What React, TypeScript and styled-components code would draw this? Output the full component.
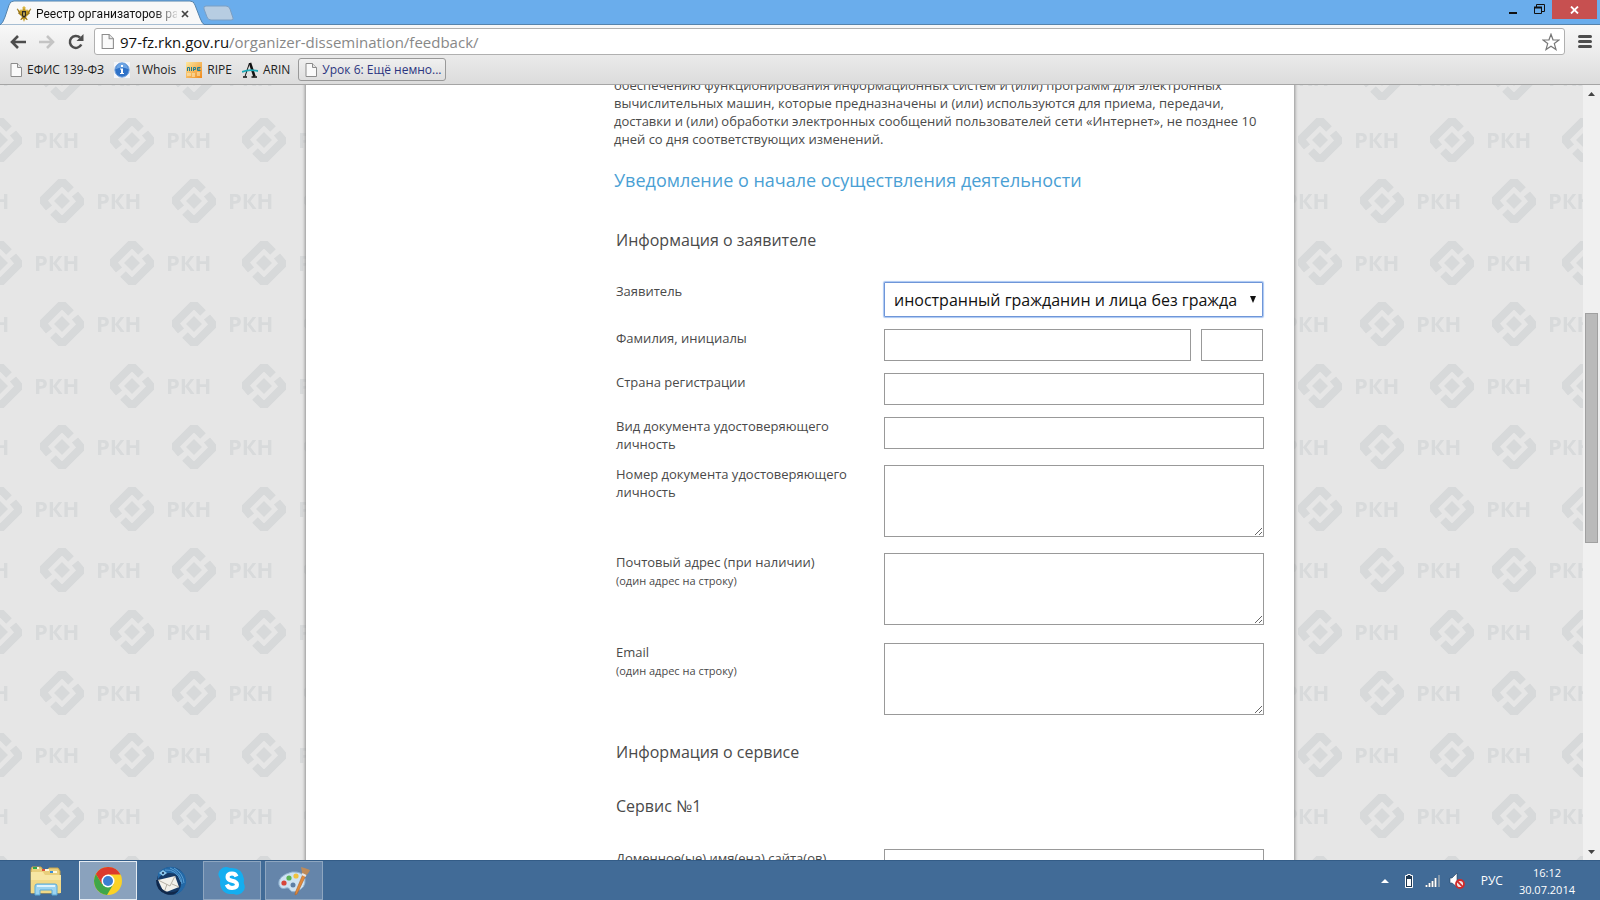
import React from "react";
import styled, { createGlobalStyle, css } from "styled-components";

const GlobalStyle = createGlobalStyle`
  * { box-sizing: border-box; }
  body { margin: 0; font-family: "Open Sans", "Noto Sans", sans-serif; color: #4a4a4a; }
  button, input, textarea, select { font: inherit; }
`;

const Window = styled.div`
  display: flex;
  flex-direction: column;
  height: 100vh;
  overflow: hidden;
`;

const TitleBar = styled.header`
  display: flex;
  flex: none;
  height: 24px;
  background: #6aadec;
`;

const Tab = styled.div`
  display: flex;
  align-items: center;
  position: relative;
  width: 204px;
  height: 25px;
  padding: 2px 13px 0 16px;
  font-family: Roboto, "Open Sans", sans-serif;
  font-size: 12px;
  color: #111;
`;

const TabShape = styled.svg`
  position: absolute;
  inset: 0;
`;

const TabTitle = styled.span`
  position: relative;
  flex: 1;
  min-width: 0;
  margin: 0 2px 0 4px;
  white-space: nowrap;
  mask-image: linear-gradient(to right, #000 118px, transparent 144px);
`;

const PlainButton = styled.button`
  display: flex;
  align-items: center;
  justify-content: center;
  flex: none;
  padding: 0;
  border: 0;
  background: none;
  color: inherit;
`;

const TabIcon = styled.svg`
  position: relative;
  flex: none;
`;

const TabClose = styled(PlainButton)`
  position: relative;
  width: 12px;
  height: 12px;
`;

const Caption = styled.div`
  display: flex;
  margin-left: auto;
  padding-right: 3px;
`;

const CaptionButton = styled(PlainButton)<{ $close?: boolean }>`
  width: ${(p) => (p.$close ? 45 : 26)}px;
  height: 19px;
  background: ${(p) => (p.$close ? "#c75050" : "transparent")};
`;

const Toolbar = styled.nav`
  display: flex;
  align-items: center;
  flex: none;
  height: 34px;
  padding: 0 8px 0 3px;
  border-top: 1px solid #5583ac;
  background: linear-gradient(#f8f8f8, #e9e9e9);
`;

const NavButton = styled(PlainButton)`
  width: 29px;
  height: 26px;
`;

const AddressBar = styled.div`
  display: flex;
  align-items: center;
  flex: 1;
  height: 27px;
  margin-left: 4px;
  padding: 0 4px 0 6px;
  border: 1px solid #b0b0b0;
  border-radius: 3px;
  background: #fff;
`;

const Url = styled.a`
  flex: 1;
  margin-left: 6px;
  font-size: 15px;
  line-height: 20px;
  color: #888;
  text-decoration: none;
  b { font-weight: 400; color: #111; }
`;

const MenuButton = styled(PlainButton)`
  width: 14px;
  height: 26px;
  margin-left: 13px;
`;

const Bookmarks = styled.nav`
  display: flex;
  align-items: center;
  flex: none;
  height: 27px;
  padding: 0 10px 3px;
  border-bottom: 1px solid #a5a5a5;
  background: linear-gradient(#e9e9e9, #dcdcdc);
`;

const Bookmark = styled.a<{ $raised?: boolean }>`
  display: flex;
  align-items: center;
  gap: 5px;
  height: 23px;
  margin-right: 10px;
  font-size: 12px;
  color: #222;
  text-decoration: none;
  white-space: nowrap;
  ${(p) =>
    p.$raised &&
    css`
      margin-left: -2px;
      padding: 0 4px 0 6px;
      border: 1px solid #999;
      border-radius: 3px;
      background: linear-gradient(#f0f0f0, #dedede);
      color: #2b3580;
    `}
`;

const Viewport = styled.div`
  display: flex;
  flex: 1;
  min-height: 0;
`;

const Page = styled.div`
  flex: 1;
  position: relative;
  padding-left: 17px;
  overflow: hidden;
  background: #e6e6e6;
`;

const Wallpaper = styled.svg`
  position: absolute;
  top: 0;
  left: 0;
  width: 100%;
  height: 100%;
  font-family: "Open Sans", sans-serif;
`;

const Sheet = styled.main`
  position: relative;
  max-width: 988px;
  min-height: 100%;
  margin: 0 auto;
  padding: 0 30px 0 308px;
  background: #fff;
  box-shadow: 0 0 3px 1px #909090;
`;

const Article = styled.article`
  margin-top: -9px;
`;

const Paragraph = styled.p`
  margin: 0;
  font-size: 13px;
  line-height: 18px;
`;

const Title = styled.h1`
  margin: 20px 0 29px;
  font-size: 18px;
  font-weight: 400;
  line-height: 24px;
  color: #4a9fd4;
`;

const Section = styled.h2`
  margin: 0;
  padding: 8px 2px 31px;
  font-size: 16px;
  font-weight: 400;
  line-height: 22px;
`;

const ServiceTitle = styled.h3`
  margin: 0;
  padding: 0 2px 31px;
  font-size: 16px;
  font-weight: 400;
  line-height: 24px;
`;

const Field = styled.div<{ $gap?: number }>`
  display: grid;
  grid-template-columns: 270px 1fr;
  align-items: start;
  margin-bottom: ${(p) => p.$gap ?? 12}px;
`;

const Label = styled.label`
  padding: 0 24px 0 2px;
  font-size: 13px;
  line-height: 18px;
`;

const Hint = styled.small`
  display: block;
  font-size: 11px;
  line-height: 20px;
`;

const Pair = styled.div`
  display: grid;
  grid-template-columns: 1fr 62px;
  gap: 10px;
  padding-right: 1px;
`;

const boxed = css`
  display: block;
  width: 100%;
  margin: 0;
  border: 1px solid #999;
  border-radius: 0;
  background: #fff;
  outline: 0;
`;

const TextInput = styled.input`
  ${boxed}
  height: 32px;
`;

const TextArea = styled.textarea`
  ${boxed}
  height: 72px;
  resize: both;
`;

const SelectWrap = styled.div`
  position: relative;
  padding-right: 1px;
`;

const Select = styled.select`
  ${boxed}
  height: 35px;
  padding: 0 24px 0 9px;
  border-color: #6f96d8;
  border-radius: 1px;
  box-shadow: 0 0 1px 1px #a9c6f2;
  font-size: 16px;
  color: #111;
  appearance: none;
`;

const SelectArrow = styled.svg`
  position: absolute;
  top: 14px;
  right: 8px;
  pointer-events: none;
`;

const ScrollBar = styled.div`
  display: flex;
  flex-direction: column;
  align-items: center;
  width: 17px;
  background: #f0f0f0;
`;

const ScrollButton = styled(PlainButton)`
  width: 17px;
  height: 17px;
`;

const ScrollTrack = styled.div`
  display: grid;
  grid-template-rows: 211fr 229fr 300fr;
  flex: 1;
  width: 13px;
`;

const ScrollThumb = styled.div`
  grid-row: 2;
  border: 1px solid #a0a0a0;
  background: #bababa;
`;

const TaskBar = styled.footer`
  display: flex;
  align-items: center;
  flex: none;
  height: 40px;
  padding: 0 25px 0 17px;
  border-top: 1px solid #335c87;
  background: #416b97;
  color: #fff;
`;

const Tasks = styled.div`
  display: flex;
  gap: 4px;
`;

const Task = styled(PlainButton)<{ $state?: "open" | "active" }>`
  width: 58px;
  height: 39px;
  border: 1px solid
    ${(p) => (p.$state === "active" ? "#e4ebf2" : p.$state ? "#8ea6c0" : "transparent")};
  background: ${(p) => (p.$state === "active" ? "#8aa2bd" : p.$state ? "#6585aa" : "none")};
`;

const Tray = styled.div`
  display: flex;
  align-items: center;
  margin-left: auto;
  font-size: 12px;
`;

const TrayButton = styled(PlainButton)`
  width: 24px;
  height: 24px;
`;

const Language = styled(PlainButton)`
  margin-left: 12px;
  font-size: 12px;
`;

const Clock = styled.time`
  margin-left: 16px;
  font-size: 11px;
  line-height: 17px;
  text-align: center;
`;

const Eagle = () => (
  <TabIcon width="16" height="16" viewBox="0 0 16 16">
    <path d="M1 2l2 6 3 3-2 3 3-1 1 3 1-3 3 1-2-3 3-3 2-6-3 3-1-2-1 2-1-3H7L6 5 5 3 4 5z" fill="#c29a22" />
    <path d="M1 3l3 4M15 3l-3 4M2 7l4 2M14 7l-4 2M5 14l2-3M11 14L9 11" stroke="#6b4d10" strokeWidth=".6" />
    <path d="M6 5h4v5l-2 2-2-2z" fill="#2c2a25" />
    <path d="M8 6v4M7 8h2" stroke="#e4c75c" />
    <path d="M6 2l2-2 2 2-2 1z" fill="#d9b53e" />
  </TabIcon>
);

const PageIcon = ({ size = 14 }: { size?: number }) => (
  <svg width={size - 2} height={size} viewBox="0 0 12 14">
    <path d="M1 .5h6.500L11.500 4.500v9H1z" fill="#fafafa" stroke="#8c8c8c" />
    <path d="M7.500.5v4h4" fill="#e4e4e4" stroke="#8c8c8c" />
  </svg>
);

const InfoIcon = () => (
  <svg width="16" height="16" viewBox="0 0 16 16">
    <path d="M0 0h16v16H0z" fill="#f4f6fa" />
    <circle cx="8" cy="8" r="7.200" fill="#2f72c8" stroke="#7ba6dc" />
    <path d="M2 7a6 6 0 0 1 12 0q-6-3-12 0z" fill="#6ea5e4" />
    <path d="M7 3h2v2H7zM6 6.500h3V11h1v1H6v-1h1V7.500H6z" fill="#fff" />
  </svg>
);

const RipeIcon = () => (
  <svg width="16" height="16" viewBox="0 0 16 16">
    <defs>
      <linearGradient id="ripe" x2="1" y2="1">
        <stop stopColor="#fbe7a0" />
        <stop offset="1" stopColor="#f08a1c" />
      </linearGradient>
    </defs>
    <path d="M0 0h16v16H0z" fill="url(#ripe)" />
    <path d="M1.500 9V5.500h2V9M5.500 5v4M7.500 9V5.500h2v2h-2M14.500 5.500h-3v3h3M11.500 7h2.500" fill="none" stroke="#1d7f96" />
    <path d="M2 11v3M4 11v3M6 12h3M6 14h3M11 11h3M11 13h3" stroke="#fdf1c8" />
  </svg>
);

const ArinIcon = () => (
  <svg width="16" height="16" viewBox="0 0 16 16">
    <path d="M7.500 1L3 14.500" stroke="#111" />
    <path d="M8 1l4.500 13.500" stroke="#111" strokeWidth="2.500" />
    <path d="M1 15h4M9.500 15H15" stroke="#111" strokeWidth="1.500" />
    <path d="M0 10q7-3 16-1" fill="none" stroke="#19a8b5" strokeWidth="1.800" />
  </svg>
);

const ExplorerIcon = () => (
  <svg width="34" height="30" viewBox="0 0 34 30">
    <path d="M2 4l1-3h9l2 3h5l1-2h9l2 3v22H2z" fill="#e9cf7c" stroke="#c7a44b" />
    <path d="M5 2h5M14 4h6M22 6h6" stroke="#fff8de" strokeWidth="2" />
    <path d="M4 2h4" stroke="#2fa64c" strokeWidth="2" />
    <path d="M13 4h3" stroke="#d94f36" strokeWidth="2" />
    <path d="M21 6h3" stroke="#3b8fd8" strokeWidth="2" />
    <path d="M2 6h12l2 3h16v18H2z" fill="#f7e6a3" />
    <path d="M2 14h30v13H2z" fill="#f1d987" />
    <path d="M6 29V20q0-2 2-2h18q2 0 2 2v9h-5v-5H11v5z" fill="#9cd4f0" stroke="#5ba9d6" />
    <path d="M8 20h18" stroke="#dff3fc" strokeWidth="2" />
  </svg>
);

const ChromeIcon = () => (
  <svg width="30" height="30" viewBox="0 0 30 30">
    <circle cx="15" cy="15" r="14" fill="#fbd226" />
    <path d="M2.900 8A14 14 0 0 0 14 29l6.500-11-5.500-3-6 3z" fill="#3fa648" />
    <path d="M2.900 8A14 14 0 0 1 27.500 8.500H15L9 18z" fill="#dc3a2c" />
    <circle cx="15" cy="15" r="6.500" fill="#fff" />
    <circle cx="15" cy="15" r="5" fill="#3a7fd0" />
  </svg>
);

const ThunderbirdIcon = () => (
  <svg width="32" height="32" viewBox="0 0 32 32">
    <circle cx="17" cy="16" r="14" fill="#163a66" />
    <path d="M4 8Q14-2 24 4q9 5 8 14-2 9-12 12 8-6 7-13-2-9-11-9Q8 7 4 14z" fill="#2368a6" />
    <path d="M11 5q12-1 16 12M16 3q11 4 12 16M20 3q9 5 10 15" fill="none" stroke="#5a9fd4" />
    <path d="M4 15l17-4 4 11-15 6z" fill="#f3f1ea" />
    <path d="M4 15l12 6 5-10M10 28l3-9M25 22l-7-3" fill="none" stroke="#b5b0a5" />
    <path d="M2 15q0 11 10 14 9 2 13-4-7 4-14 1-6-3-7-11z" fill="#10284b" />
    <path d="M5 8l4-3 4 3-4 3z" fill="#8cc6ea" />
    <circle cx="9" cy="8" r="1" fill="#0f2444" />
  </svg>
);

const SkypeIcon = () => (
  <svg width="30" height="30" viewBox="0 0 30 30">
    <path d="M9 1q2 0 4 1 12-1 14 11 0 2-.3 4 3 6-2 10-4 3-8 1Q4 29 3 17l.200-4Q-1 7 4 3q2-2 5-2z" fill="#14aef0" />
    <path d="M19.500 10.500Q18.500 7.500 15 7.500q-4.500 0-4.500 3.500 0 3 4.500 3.800 5 1 5 4t-5 3.200q-4 0-5.200-3.500" fill="none" stroke="#fff" strokeWidth="4" />
  </svg>
);

const PaintIcon = () => (
  <svg width="34" height="32" viewBox="0 0 34 32">
    <path d="M15 7q11-1 13 7 1 9-8 12-5 2-7-1-1-3-4-2-5 2-7-3Q0 11 15 7z" fill="#cfe3f3" stroke="#8fb2d0" />
    <circle cx="16" cy="20" r="2.500" fill="#5f7fa5" />
    <circle cx="7" cy="18" r="2.600" fill="#d8463b" />
    <circle cx="12" cy="13" r="2.600" fill="#5bb455" />
    <circle cx="19" cy="11" r="2.600" fill="#f0c23e" />
    <path d="M29 10L20 29l-2 1 .5-3L26 9z" fill="#e08a3c" stroke="#b1652a" strokeWidth=".6" />
    <path d="M24 2q4 1 9 3-2 5-6 6-3-1-2-4z" fill="#bd8a59" />
    <path d="M25 9l4 2" stroke="#e6e6e6" strokeWidth="2" />
  </svg>
);

const Emblem = ({ x, y }: { x: number; y: number }) => (
  <g transform={`translate(${x} ${y})`}>
    <path d="M9 -11L2 -18H-2L-18 -2V1L-13 7M-9 11L-2 18H2L18 2V-1L13 -7" fill="none" stroke="#d7d9da" strokeWidth="8" />
    <path d="M0 -8L8 0L0 8L-8 0z" fill="#d7d9da" />
    <text x="34" y="8" fontSize="22" fontWeight="700" fill="#d8dadb">РКН</text>
  </g>
);

const bookmarks = [
  { name: "ЕФИС 139-ФЗ", icon: <PageIcon /> },
  { name: "1Whois", icon: <InfoIcon /> },
  { name: "RIPE", icon: <RipeIcon /> },
  { name: "ARIN", icon: <ArinIcon /> },
  { name: "Урок 6: Ещё немно...", icon: <PageIcon />, raised: true },
];

const App = () => (
  <Window>
    <GlobalStyle />
    <TitleBar>
      <Tab>
        <TabShape width="240" height="25" viewBox="0 0 240 25">
          <path d="M0 25Q3 23 5 17L9 5q1-4 5-4h176q4 0 5 4l5 13q2 6 5 7z" fill="#f8f8f8" stroke="#5583ac" />
          <path d="M206 6h20q3 0 4 3l3 9q1 2-2 2h-20q-3 0-4-3l-3-8q-1-3 2-3z" fill="#b7cde2" stroke="#7b9fc4" />
        </TabShape>
        <Eagle />
        <TabTitle>Реестр организаторов ра</TabTitle>
        <TabClose aria-label="Закрыть вкладку">
          <svg width="8" height="8" viewBox="0 0 8 8"><path d="M1 1l6 6M7 1L1 7" stroke="#444" strokeWidth="1.700" /></svg>
        </TabClose>
      </Tab>
      <Caption>
        <CaptionButton aria-label="Свернуть">
          <svg width="10" height="10" viewBox="0 0 10 10"><path d="M1 8h8" stroke="#111" strokeWidth="2" /></svg>
        </CaptionButton>
        <CaptionButton aria-label="Восстановить">
          <svg width="11" height="11" viewBox="0 0 11 11">
            <path d="M.5 3.500h7v6h-7zM2.500 3V.5h8v7H8" fill="none" stroke="#111" />
            <path d="M0 3.500h8" stroke="#111" strokeWidth="2" />
          </svg>
        </CaptionButton>
        <CaptionButton $close aria-label="Закрыть">
          <svg width="9" height="8" viewBox="0 0 9 8"><path d="M1 .5l7 7M8 .5l-7 7" stroke="#fff" strokeWidth="1.800" /></svg>
        </CaptionButton>
      </Caption>
    </TitleBar>
    <Toolbar>
      <NavButton aria-label="Назад">
        <svg width="16" height="14" viewBox="0 0 16 14"><path d="M16 7H3M8 1L2 7l6 6" fill="none" stroke="#4d4d4d" strokeWidth="2.600" /></svg>
      </NavButton>
      <NavButton aria-label="Вперёд">
        <svg width="16" height="14" viewBox="0 0 16 14"><path d="M0 7h13M8 1l6 6-6 6" fill="none" stroke="#c4c4c4" strokeWidth="2.600" /></svg>
      </NavButton>
      <NavButton aria-label="Обновить">
        <svg width="16" height="16" viewBox="0 0 16 16">
          <path d="M13.300 10.500A6 6 0 1 1 12 3.500" fill="none" stroke="#4d4d4d" strokeWidth="2.500" />
          <path d="M15.500 0v7h-7z" fill="#4d4d4d" />
        </svg>
      </NavButton>
      <AddressBar>
        <PageIcon size={15} />
        <Url href="#"><b>97-fz.rkn.gov.ru</b>/organizer-dissemination/feedback/</Url>
        <PlainButton aria-label="В закладки">
          <svg width="18" height="18" viewBox="0 0 18 18">
            <path d="M9 1.200l2 5.600 6 .2-4.700 3.600 1.700 5.900L9 13.200l-5 3.300 1.700-5.900L1 7l6-.2z" fill="#fff" stroke="#777" strokeWidth="1.200" />
          </svg>
        </PlainButton>
      </AddressBar>
      <MenuButton aria-label="Меню">
        <svg width="14" height="13" viewBox="0 0 14 13"><path d="M1.500 1.500h11M1.500 6.500h11M1.500 11.500h11" stroke="#4d4d4d" strokeWidth="3" strokeLinecap="round" /></svg>
      </MenuButton>
    </Toolbar>
    <Bookmarks>
      {bookmarks.map((b) => (
        <Bookmark key={b.name} href="#" $raised={b.raised}>
          {b.icon}
          {b.name}
        </Bookmark>
      ))}
    </Bookmarks>
    <Viewport>
      <Page>
        <Wallpaper aria-hidden="true">
          <defs>
            <pattern id="rkn" width="132" height="123" x="-36" y="22" patternUnits="userSpaceOnUse">
              <Emblem x={36} y={33} />
              <Emblem x={98} y={94} />
              <Emblem x={-34} y={94} />
            </pattern>
          </defs>
          <rect width="100%" height="100%" fill="url(#rkn)" />
        </Wallpaper>
        <Sheet>
          <Article>
            <Paragraph>
              обеспечению функционирования информационных систем и (или) программ для электронных
              вычислительных машин, которые предназначены и (или) используются для приема, передачи,
              доставки и (или) обработки электронных сообщений пользователей сети «Интернет», не позднее 10
              дней со дня соответствующих изменений.
            </Paragraph>
            <Title>Уведомление о начале осуществления деятельности</Title>
            <form>
              <Section>Информация о заявителе</Section>
              <Field>
                <Label htmlFor="applicant">Заявитель</Label>
                <SelectWrap>
                  <Select id="applicant">
                    <option>иностранный гражданин и лица без гражда</option>
                  </Select>
                  <SelectArrow width="6" height="7" viewBox="0 0 6 7"><path d="M0 0h6L3 7z" fill="#111" /></SelectArrow>
                </SelectWrap>
              </Field>
              <Field>
                <Label htmlFor="surname">Фамилия, инициалы</Label>
                <Pair>
                  <TextInput id="surname" />
                  <TextInput aria-label="Инициалы" />
                </Pair>
              </Field>
              <Field>
                <Label htmlFor="country">Страна регистрации</Label>
                <TextInput id="country" />
              </Field>
              <Field>
                <Label htmlFor="doctype">Вид документа удостоверяющего личность</Label>
                <TextInput id="doctype" />
              </Field>
              <Field $gap={16}>
                <Label htmlFor="docnum">Номер документа удостоверяющего личность</Label>
                <TextArea id="docnum" />
              </Field>
              <Field $gap={18}>
                <Label htmlFor="post">Почтовый адрес (при наличии)<Hint>(один адрес на строку)</Hint></Label>
                <TextArea id="post" />
              </Field>
              <Field $gap={18}>
                <Label htmlFor="email">Email<Hint>(один адрес на строку)</Hint></Label>
                <TextArea id="email" />
              </Field>
              <Section>Информация о сервисе</Section>
              <ServiceTitle>Сервис №1</ServiceTitle>
              <Field>
                <Label htmlFor="domain">Доменное(ые) имя(ена) сайта(ов)</Label>
                <TextInput id="domain" />
              </Field>
            </form>
          </Article>
        </Sheet>
      </Page>
      <ScrollBar>
        <ScrollButton aria-label="Вверх">
          <svg width="7" height="4" viewBox="0 0 7 4"><path d="M0 4h7L3.500 0z" fill="#444" /></svg>
        </ScrollButton>
        <ScrollTrack><ScrollThumb /></ScrollTrack>
        <ScrollButton aria-label="Вниз">
          <svg width="7" height="4" viewBox="0 0 7 4"><path d="M0 0h7L3.500 4z" fill="#444" /></svg>
        </ScrollButton>
      </ScrollBar>
    </Viewport>
    <TaskBar>
      <Tasks>
        <Task aria-label="Проводник"><ExplorerIcon /></Task>
        <Task aria-label="Chrome" $state="active"><ChromeIcon /></Task>
        <Task aria-label="Thunderbird"><ThunderbirdIcon /></Task>
        <Task aria-label="Skype" $state="open"><SkypeIcon /></Task>
        <Task aria-label="Paint" $state="open"><PaintIcon /></Task>
      </Tasks>
      <Tray>
        <TrayButton aria-label="Скрытые значки">
          <svg width="8" height="4" viewBox="0 0 8 4"><path d="M0 4h8L4 0z" fill="#fff" /></svg>
        </TrayButton>
        <TrayButton aria-label="Батарея">
          <svg width="10" height="16" viewBox="0 0 10 16">
            <path d="M1.500 2.500h2v-1h3v1h2v12h-7z" fill="#1d3650" stroke="#fff" />
            <path d="M3 6h4v7H3z" fill="#fff" />
          </svg>
        </TrayButton>
        <TrayButton aria-label="Сеть">
          <svg width="16" height="14" viewBox="0 0 16 14">
            <path d="M1.500 13v-2M4.500 13v-4M7.500 13V7M10.500 13V4" stroke="#23415f" strokeWidth="3" />
            <path d="M1.500 13v-2M4.500 13v-4M7.500 13V7M10.500 13V4" stroke="#fff" strokeWidth="2" />
            <path d="M14 13V1" stroke="#8297ab" strokeWidth="2" />
          </svg>
        </TrayButton>
        <TrayButton aria-label="Звук">
          <svg width="16" height="16" viewBox="0 0 16 16">
            <path d="M1 5h2l5-5v14L3 10H1z" fill="#fff" stroke="#23415f" strokeWidth=".6" />
            <circle cx="11" cy="11" r="4" fill="#f4e3e3" stroke="#d02b2b" strokeWidth="1.800" />
            <path d="M8.200 8.200l5.600 5.600" stroke="#d02b2b" strokeWidth="1.800" />
          </svg>
        </TrayButton>
        <Language>РУС</Language>
        <Clock>16:12<br />30.07.2014</Clock>
      </Tray>
    </TaskBar>
  </Window>
);

export default App;
